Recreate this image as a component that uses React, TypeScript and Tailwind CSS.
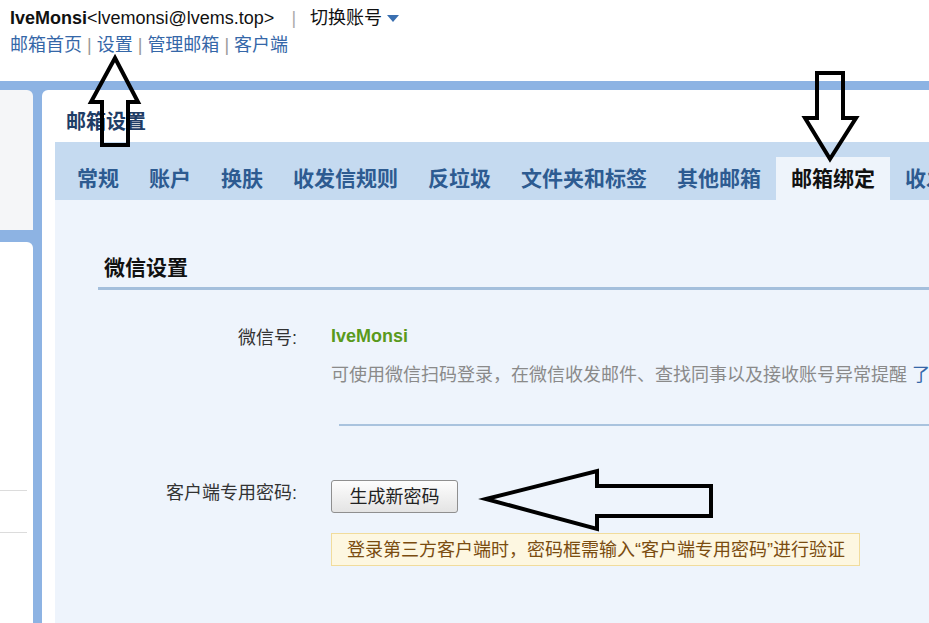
import React from 'react';

const tabs = ['常规', '账户', '换肤', '收发信规则', '反垃圾', '文件夹和标签', '其他邮箱', '邮箱绑定', '收发信设置'];
const activeTab = '邮箱绑定';

const navLinks = ['邮箱首页', '设置', '管理邮箱', '客户端'];

function Header() {
  return (
    <header className="h-[81px] shrink-0 bg-white px-[10px] pt-[9px] text-[18px] leading-[18px]">
      <div className="flex items-center h-[18px] whitespace-nowrap text-[#111]">
        <span className="font-bold">IveMonsi</span>
        <span>&lt;lvemonsi@lvems.top&gt;</span>
        <span className="ml-[17px] text-[#aaa]">|</span>
        <span className="ml-[14px]">切换账号</span>
        <svg className="ml-[5px] mt-[2px]" width="12" height="8" viewBox="0 0 12 8">
          <path d="M0 0 L12 0 L6 7 Z" fill="#3a6fb0" />
        </svg>
      </div>
      <div className="flex items-center h-[18px] mt-[9px] whitespace-nowrap">
        {navLinks.map((l, i) => (
          <React.Fragment key={l}>
            {i > 0 && <span className="mx-[5px] text-[#999]">|</span>}
            <span className="text-[#3567a8]">{l}</span>
          </React.Fragment>
        ))}
      </div>
    </header>
  );
}

function Sidebar() {
  return (
    <aside className="w-[33px] shrink-0 flex flex-col gap-[12px]">
      <div className="h-[140px] bg-[#f5f6f8] rounded-tr-[6px]" />
      <div className="flex-1 bg-white rounded-tr-[6px] pt-[248px]">
        <div className="w-[27px] h-px bg-[#dcdcdc]" />
        <div className="w-[27px] h-px bg-[#dcdcdc] mt-[41px]" />
      </div>
    </aside>
  );
}

function Tabs() {
  return (
    <nav className="h-[58px] shrink-0 bg-[#c5daf0] flex items-end pl-[7px] whitespace-nowrap overflow-hidden">
      {tabs.map(t => (
        <div
          key={t}
          className={
            t === activeTab
              ? 'shrink-0 h-[43px] px-[15px] flex items-center bg-[#eef4fb] text-[#111] font-bold text-[21px] leading-[21px]'
              : 'shrink-0 h-[43px] px-[15px] flex items-center text-[#2d5b91] font-bold text-[21px] leading-[21px]'
          }
        >
          {t}
        </div>
      ))}
    </nav>
  );
}

function WechatSection() {
  return (
    <div className="flex-1 bg-[#eef4fc] pl-[43px] pt-[57px]">
      {/* Section heading */}
      <h2 className="pl-[6px] pb-[9px] border-b-[3px] border-[#a4bfdc] text-[21px] leading-[21px] font-bold text-[#111]">
        微信设置
      </h2>

      {/* WeChat id */}
      <div className="flex mt-[39px] text-[18px] leading-[18px]">
        <div className="w-[199px] shrink-0 text-right text-[#333]">微信号:</div>
        <div className="ml-[34px] whitespace-nowrap">
          <div className="font-bold text-[#5a9a1c] -mt-[2px]">IveMonsi</div>
          <div className="mt-[21px] text-[#8a8a8a]">
            可使用微信扫码登录，在微信收发邮件、查找同事以及接收账号异常提醒 <span className="text-[#3567a8]">了解更多</span>
          </div>
          <div className="ml-[8px] mt-[40px] h-[2px] bg-[#a9c3de]" />
        </div>
      </div>

      {/* Client password */}
      <div className="flex mt-[54px] text-[18px] leading-[18px]">
        <div className="w-[199px] shrink-0 text-right text-[#333] pt-[4px]">客户端专用密码:</div>
        <div className="ml-[34px] flex flex-col items-start">
          <button className="w-[127px] h-[33px] rounded-[3px] border border-[#8f8f8f] bg-gradient-to-b from-[#fdfdfd] to-[#e4e4e4] text-[#222] text-[18px] leading-[18px]">
            生成新密码
          </button>
          <div className="mt-[20px] w-[529px] h-[33px] flex items-center px-[15px] bg-[#fdf7e1] border border-[#f1dc9c] text-[#7a4c10] whitespace-nowrap">
            登录第三方客户端时，密码框需输入“客户端专用密码”进行验证
          </div>
        </div>
      </div>
    </div>
  );
}

function Arrows() {
  return (
    <svg className="absolute inset-0 pointer-events-none" width="929" height="623" viewBox="0 0 929 623">
      <g fill="none" stroke="#000" strokeWidth="4" strokeLinejoin="miter">
        <path d="M115 58 L138 102 L128 102 L128 145 L102 145 L102 102 L91 102 Z" />
        <path d="M817 73 L843 73 L843 118 L856 118 L830 159 L805 118 L817 118 Z" />
        <path d="M486 499 L597 471 L597 486 L711 486 L711 516 L597 516 L597 529 Z" />
      </g>
    </svg>
  );
}

export default function App() {
  return (
    <div className="relative w-[929px] h-[623px] overflow-hidden flex flex-col bg-white font-['Liberation_Sans','Noto_Sans_CJK_SC',sans-serif]">
      <Header />
      <div className="flex-1 flex gap-[9px] bg-[#8db3e3] pt-[9px] min-h-0">
        <Sidebar />
        <main className="flex-1 min-w-0 flex flex-col bg-white rounded-tl-[6px] pl-[13px] overflow-hidden">
          <h1 className="h-[52px] shrink-0 pl-[11px] pt-[22px] text-[20px] leading-[20px] font-bold text-[#1f3d66] whitespace-nowrap">
            邮箱设置
          </h1>
          <Tabs />
          <WechatSection />
        </main>
      </div>
      <Arrows />
    </div>
  );
}
